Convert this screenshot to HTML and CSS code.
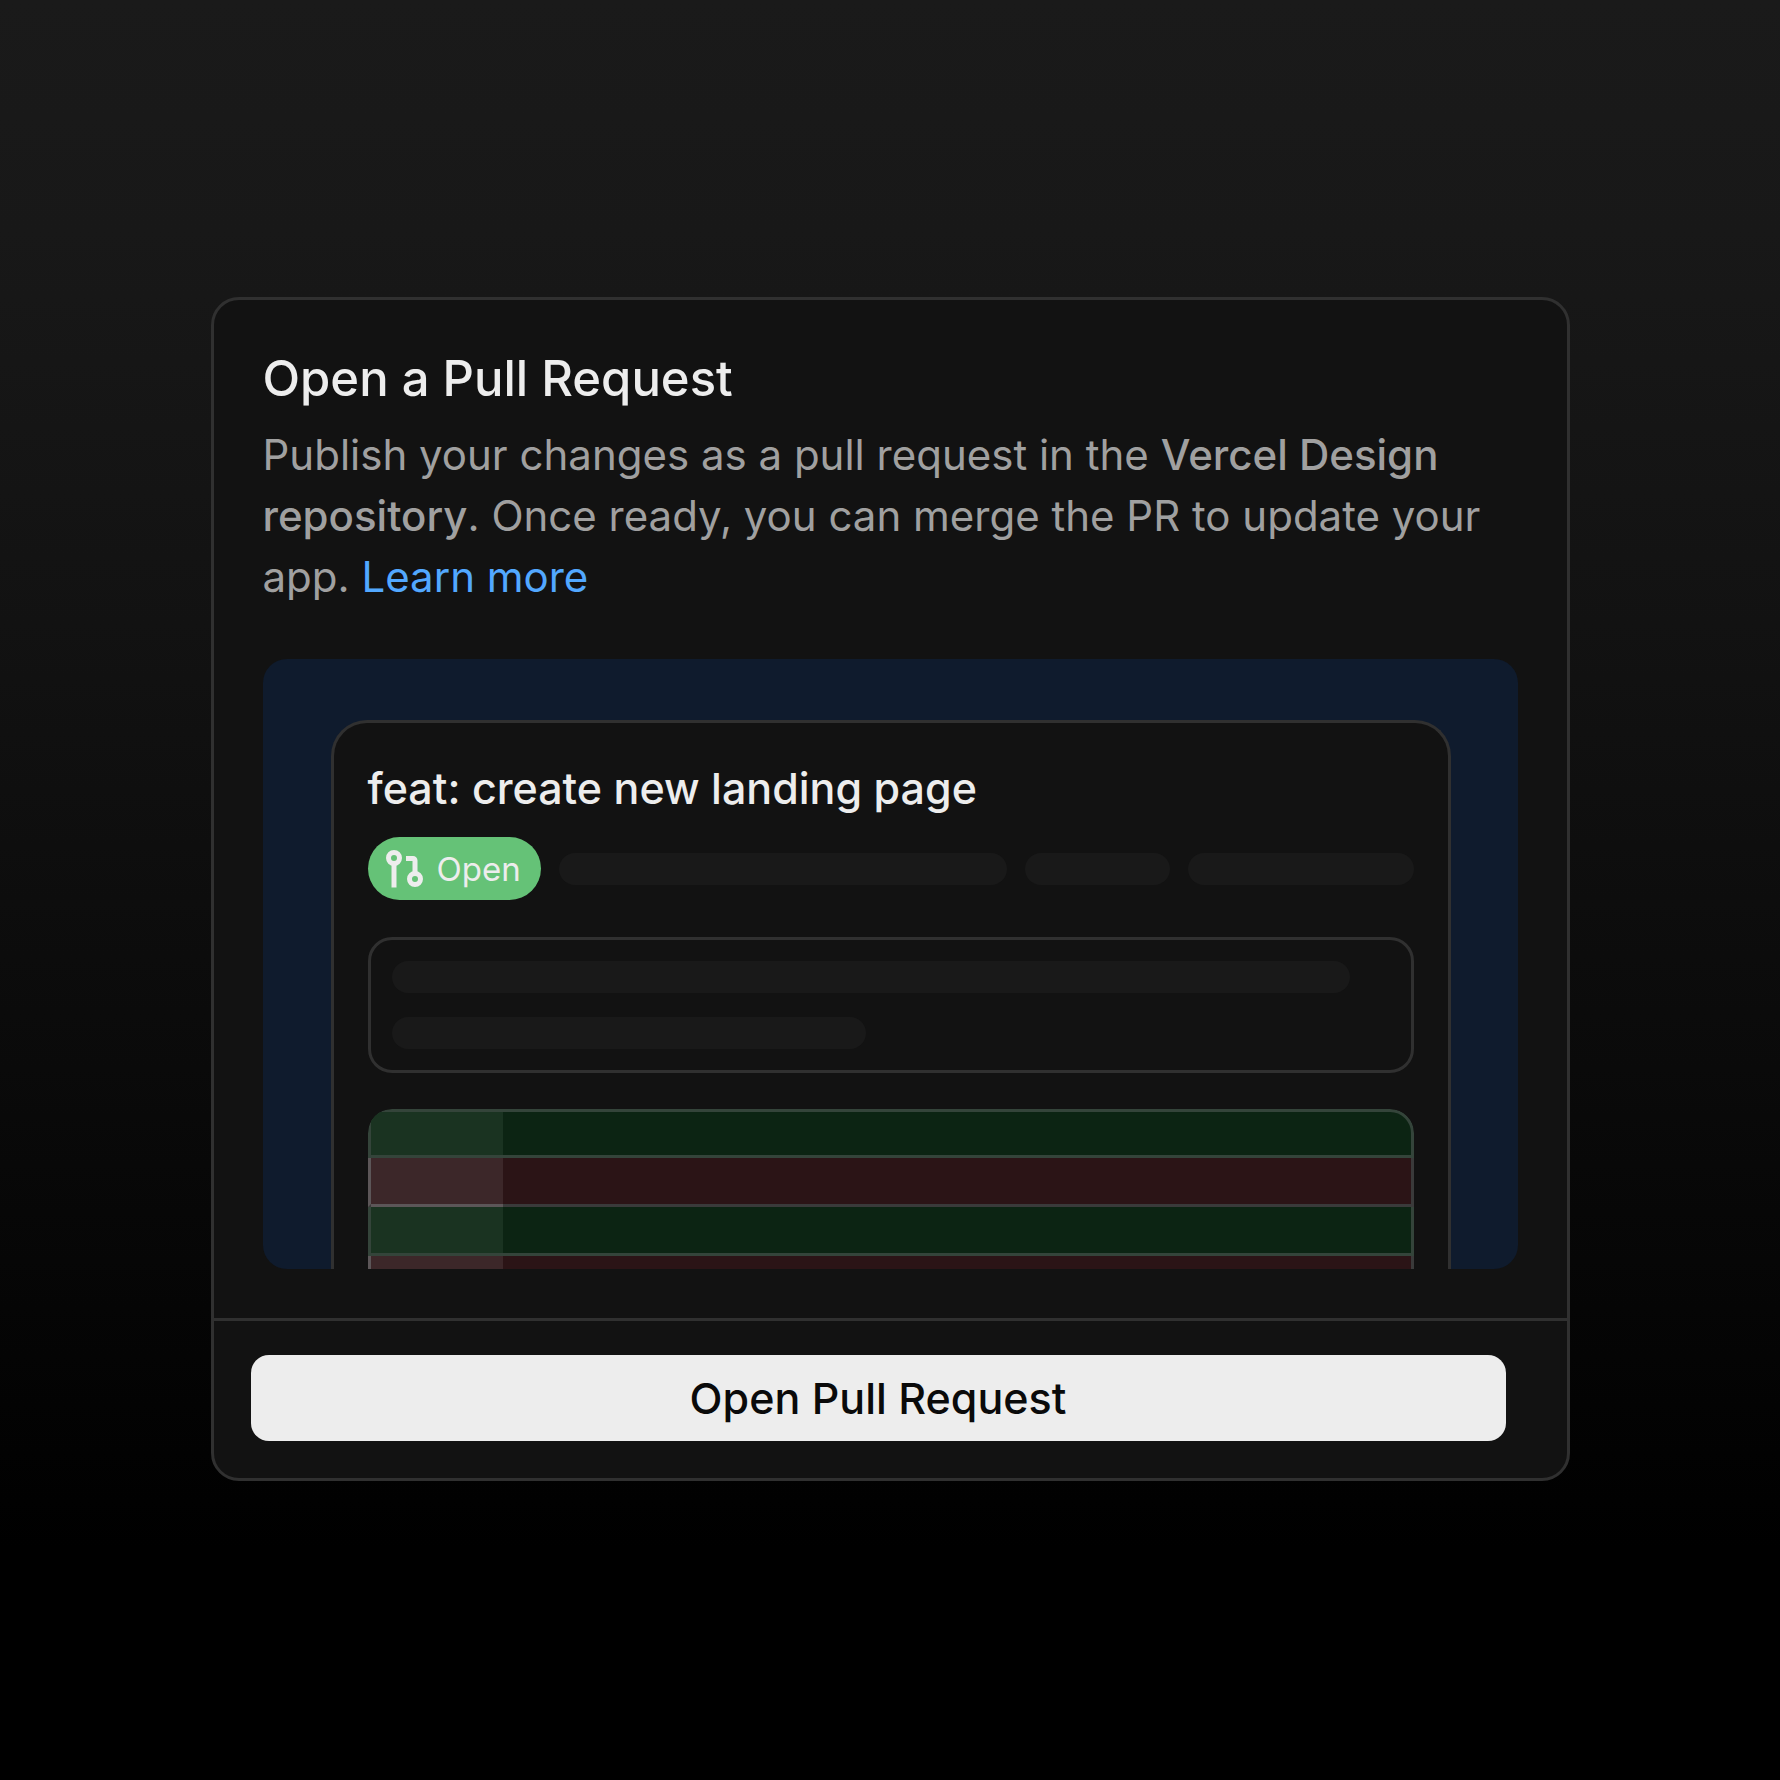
FILE: index.html
```html
<!DOCTYPE html>
<html lang="en">
<head>
    <meta charset="UTF-8">
    <meta name="viewport" content="width=device-width, initial-scale=1.0">
    <title>Open a Pull Request</title>
    <link rel="stylesheet" href="styles.css">
</head>
<body>
    <main class="modal">
        <section class="modal-body">
            <h1>Open a Pull Request</h1>
            <p class="description">Publish your changes as a pull request in the <strong>Vercel Design repository</strong>. Once ready, you can merge the PR to update your app. <a href="#">Learn more</a></p>

            <div class="preview">
                <div class="pr-card">
                    <h2>feat: create new landing page</h2>
                    <div class="pr-meta">
                        <span class="badge">
                            <svg class="badge-icon" viewBox="0 0 37 38" fill="none" stroke="currentColor" stroke-width="5" aria-hidden="true">
                                <circle cx="8" cy="8" r="5.5"/>
                                <path d="M8 13v24.5"/>
                                <path d="M20 8.5h7a2 2 0 0 1 2 2V24"/>
                                <circle cx="29" cy="29" r="5.5"/>
                            </svg>
                            Open
                        </span>
                        <span class="skeleton meta-long"></span>
                        <span class="skeleton meta-short"></span>
                        <span class="skeleton meta-medium"></span>
                    </div>
                    <div class="comment">
                        <div class="skeleton line-long"></div>
                        <div class="skeleton line-short"></div>
                    </div>
                    <div class="diff">
                        <div class="diff-row added"><span class="gutter"></span></div>
                        <div class="diff-row removed"><span class="gutter"></span></div>
                        <div class="diff-row added"><span class="gutter"></span></div>
                        <div class="diff-row removed"><span class="gutter"></span></div>
                    </div>
                </div>
            </div>
        </section>

        <footer class="modal-footer">
            <button type="button" class="submit-button">Open Pull Request</button>
        </footer>
    </main>
</body>
</html>
```
FILE: styles.css
```css
* {
    box-sizing: border-box;
}

body {
    margin: 0;
    padding-bottom: 2px;
    min-height: 100vh;
    display: flex;
    align-items: center;
    justify-content: center;
    font-family: Inter, "Liberation Sans", sans-serif;
    color: #ededed;
    background: linear-gradient(#1a1a1a 0%, #181818 13%, #121212 35%, #0a0a0a 60%, #000 87%);
}

h1, h2, p {
    margin: 0;
    font-weight: 500;
}

.modal {
    width: 100%;
    max-width: 1359px;
    background-color: #121212;
    border: 3px solid #303030;
    border-radius: 28px;
    overflow: hidden;
}

.modal-body {
    padding: 49px;
}

h1 {
    font-size: 49px;
    line-height: 60px;
}

.description {
    margin-top: 15px;
    font-size: 42px;
    font-weight: 400;
    line-height: 61px;
    color: #a0a0a0;
}

.description strong {
    font-weight: 500;
}

.description a {
    color: #52a8ff;
    text-decoration: none;
}

/* Illustration of the pull request */
.preview {
    height: 610px;
    margin-top: 52px;
    padding: 61px 67px 0 68px;
    background-color: #0f1b2d;
    border-radius: 24px;
    overflow: hidden;
}

.pr-card {
    padding: 35px 34px 0;
    background-color: #121212;
    border: 3px solid #303030;
    border-bottom: none;
    border-radius: 36px 36px 0 0;
}

h2 {
    font-size: 43px;
    line-height: 60px;
}

.pr-meta {
    display: flex;
    align-items: center;
    gap: 18px;
    margin-top: 19px;
}

.badge {
    display: flex;
    align-items: center;
    gap: 14px;
    height: 63px;
    padding: 0 20px 0 18px;
    border-radius: 32px;
    background-color: #65c277;
    color: #ededed;
    font-size: 33px;
}

.badge-icon {
    width: 37px;
    height: 38px;
}

.skeleton {
    height: 32px;
    border-radius: 16px;
    background-color: #191919;
}

.meta-long {
    flex: 450;
}

.meta-short {
    flex: 146;
}

.meta-medium {
    flex: 226;
}

.comment {
    display: flex;
    flex-direction: column;
    gap: 24px;
    margin-top: 37px;
    padding: 21px;
    border: 3px solid #303030;
    border-radius: 24px;
}

.line-long {
    width: 96%;
}

.line-short {
    width: 47.5%;
}

.diff {
    margin-top: 36px;
    border-radius: 24px 24px 0 0;
    overflow: hidden;
}

.diff-row {
    display: flex;
    height: 49px;
    border: 3px solid #34443a;
    border-top: none;
}

.diff-row:first-child {
    border-top: 3px solid #34443a;
    border-radius: 24px 24px 0 0;
}

.added {
    background-color: #0c2413;
}

.removed {
    background-color: #2b1416;
    border-color: #3a3a3a;
    border-left-color: #5c5658;
}

.gutter {
    width: 132px;
}

.added .gutter {
    background-color: #1a3321;
}

/* the gutter tints the line below it as well */
.removed .gutter {
    margin-bottom: -3px;
    background-color: #3c2729;
    border-bottom: 3px solid #5c5658;
}

.modal-footer {
    padding: 34px 61px 37px 37px;
    border-top: 3px solid #303030;
}

.submit-button {
    width: 100%;
    height: 86px;
    border: none;
    border-radius: 18px;
    background-color: #ededed;
    color: #0a0a0a;
    font-family: inherit;
    font-size: 43px;
    font-weight: 500;
    cursor: pointer;
}
```
